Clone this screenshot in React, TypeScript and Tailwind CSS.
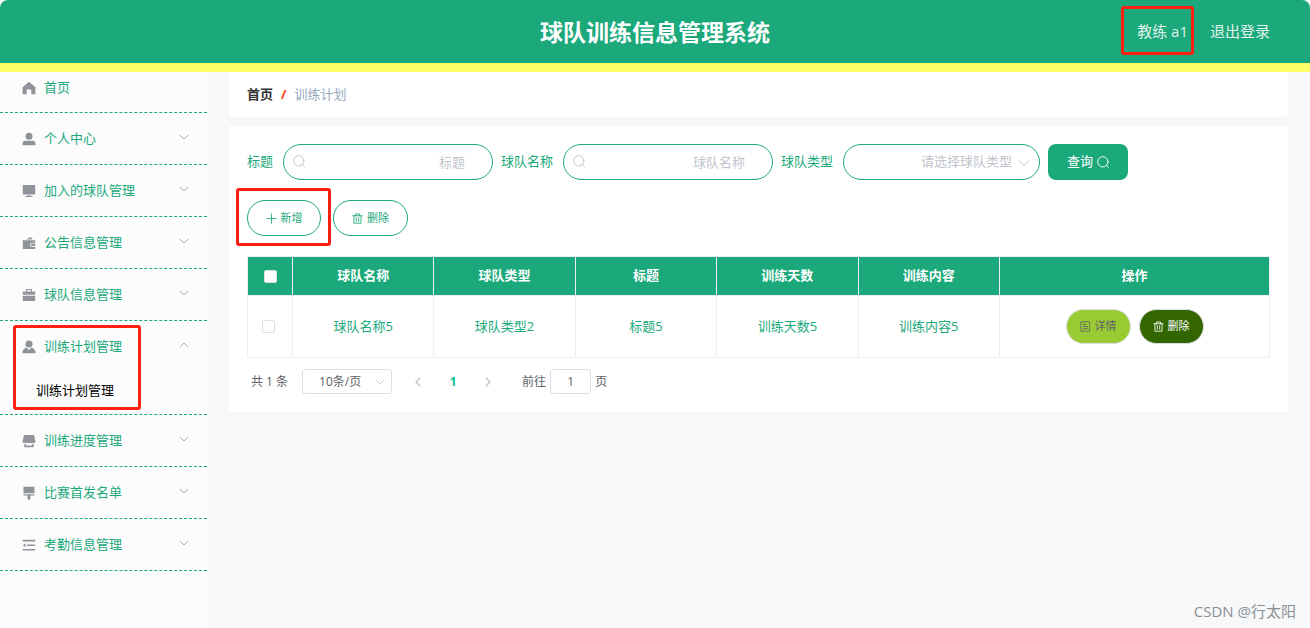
import React from "react";

type IconProps = { className?: string };

function Solid({ className = "", children }: IconProps & { children: React.ReactNode }) {
  return (
    <svg viewBox="0 0 14 14" fill="currentColor" aria-hidden="true" className={`size-3.5 shrink-0 ${className}`}>
      {children}
    </svg>
  );
}

function Line({ className = "", children }: IconProps & { children: React.ReactNode }) {
  return (
    <svg
      viewBox="0 0 14 14"
      fill="none"
      stroke="currentColor"
      strokeWidth="1.1"
      strokeLinecap="round"
      strokeLinejoin="round"
      aria-hidden="true"
      className={`shrink-0 ${className}`}
    >
      {children}
    </svg>
  );
}

const HomeIcon = () => (
  <Solid>
    <path d="M7 .8 13.400 6.200V13.200H9.300V9.200A.7.7 0 0 0 8.600 8.500H5.400a.7.7 0 0 0-.7.7v4H.6V6.200Z" />
  </Solid>
);
const UserIcon = () => (
  <Solid>
    <circle cx="7" cy="4.200" r="3.500" />
    <path d="M3.500 8.800h7a3 3 0 0 1 3 3v.8a.7.7 0 0 1-.7.7H1.200a.7.7 0 0 1-.7-.7v-.8a3 3 0 0 1 3-3Z" />
  </Solid>
);
const PlatformIcon = () => (
  <Solid>
    <path d="M.8 1h12.400v9.400H.8ZM5.500 11.200h3v.8h2v1h-7v-1h2Z" />
  </Solid>
);
const WalletIcon = () => (
  <Solid>
    <path d="M4 3.600 8.400 1l2.400 2.600ZM.8 4.300h12.400v2.400H10a2 2 0 0 0 0 4.200h3.200V13H.8ZM10 7.600h3.200V10H10a1.200 1.200 0 0 1 0-2.400Z" />
  </Solid>
);
const CaseIcon = () => (
  <Solid>
    <path d="M4 1h6v2.500h3.200v3.300H.8V3.500H4Zm1.100 1v1.500h3.800V2ZM.8 7.800h12.400V13H.8Z" />
  </Solid>
);
const CustomIcon = () => (
  <Solid>
    <circle cx="7" cy="3.900" r="3.500" />
    <path d="M4.600 7.500 7 9.900l2.400-2.400c2.500.7 4.300 2.600 4.300 5.800H.3c0-3.200 1.800-5.100 4.300-5.800Z" />
  </Solid>
);
const ShopIcon = () => (
  <Solid>
    <path d="M1.900 1h10.200l1.300 6.800c0 1.500-1.900 1.700-2.300.6-.4 1-2.300 1-2.700 0-.4 1-2.400 1-2.800 0-.4 1-2.300 1-2.700 0-.4 1.100-2.300.9-2.300-.6ZM2.300 10h1.500v1.400h6.400V10h1.500v3.200H2.300Z" />
  </Solid>
);
const BrushIcon = () => (
  <Solid>
    <path d="M1.500.8h11v6.500h-11ZM1.500 8.200h11v1.300H8.400v3a1.400 1.400 0 0 1-2.800 0v-3H1.500Z" />
  </Solid>
);
const FoldIcon = () => (
  <Solid>
    <path d="M.8 1.800h12.400v1.600H.8ZM5 6.400h8.200V8H5ZM.8 11h12.400v1.600H.8ZM3.600 5.200v4L.9 7.200Z" />
  </Solid>
);

const Chevron = ({ className = "" }: IconProps) => (
  <Line className={className}>
    <path d="M1.500 4.500 7 9.700l5.500-5.200" />
  </Line>
);
const Search = ({ className = "" }: IconProps) => (
  <Line className={className}>
    <circle cx="6.800" cy="6.800" r="6" />
    <path d="m11 11 2.300 2.300" />
  </Line>
);
const Plus = ({ className = "" }: IconProps) => (
  <Line className={className}>
    <path d="M7 1v12M1 7h12" />
  </Line>
);
const Trash = ({ className = "" }: IconProps) => (
  <Line className={className}>
    <path d="M1 3.500h12M4.500 3.500V1.200h5v2.300M2.500 3.500V13h9V3.500M5.500 6v4.500M8.500 6v4.500" />
  </Line>
);
const Doc = ({ className = "" }: IconProps) => (
  <Line className={className}>
    <path d="M1.700 1h10.600v12H1.700ZM4.300 4.300h3M4.300 7h5.400M4.300 9.800h5.400" />
  </Line>
);

const Mark = ({ className = "" }: IconProps) => (
  <span aria-hidden="true" className={`pointer-events-none absolute z-10 rounded-[3px] border-3 border-[#ff1f10] ${className}`} />
);

const menu = [
  { label: "个人中心", Icon: UserIcon },
  { label: "加入的球队管理", Icon: PlatformIcon },
  { label: "公告信息管理", Icon: WalletIcon },
  { label: "球队信息管理", Icon: CaseIcon },
  { label: "训练计划管理", Icon: CustomIcon, child: "训练计划管理" },
  { label: "训练进度管理", Icon: ShopIcon },
  { label: "比赛首发名单", Icon: BrushIcon },
  { label: "考勤信息管理", Icon: FoldIcon },
];

const columns = ["球队名称", "球队类型", "标题", "训练天数", "训练内容"];
const rows = [["球队名称5", "球队类型2", "标题5", "训练天数5", "训练内容5"]];

function Sidebar() {
  return (
    <nav className="w-[207px] shrink-0 bg-[#fcfcfc] text-[13px] text-[#1ba97b]">
      <ul>
        <li className="border-b border-dashed border-[#1ba97b]">
          <a href="#home" className="flex h-10 items-center gap-2 pb-2 pl-[22px]">
            <span className="text-[#909399]"><HomeIcon /></span>
            首页
          </a>
        </li>
        {menu.map(({ label, Icon, child }) => (
          <li key={label} className="relative border-b border-dashed border-[#1ba97b]">
            <button type="button" aria-expanded={!!child} className="flex h-[51px] w-full items-center gap-2 pr-[18px] pl-[22px]">
              <span className="text-[#909399]"><Icon /></span>
              {label}
              <Chevron className={child ? "mb-1 ml-auto size-2.5 rotate-180 text-[#909399]" : "mb-1 ml-auto size-2.5 text-[#909399]"} />
            </button>
            {child && (
              <>
                <a href="#plan" className="flex h-[42px] items-center pb-1 pl-9 text-black">{child}</a>
                <Mark className="top-1 left-[13px] h-[85px] w-32" />
              </>
            )}
          </li>
        ))}
      </ul>
    </nav>
  );
}

function SearchField({ id, label }: { id: string; label: string }) {
  return (
    <div className="flex items-center gap-2.5">
      <label htmlFor={id}>{label}</label>
      <div className="relative">
        <Search className="absolute top-[11px] left-2.5 size-3 text-[#c0c4cc]" />
        <input
          id={id}
          type="text"
          placeholder={label}
          className="h-9 w-[210px] rounded-full border border-[#1ba97b] bg-white pr-[27px] pl-7 text-right outline-none placeholder:text-[#c0c4cc]"
        />
      </div>
    </div>
  );
}

function Pagination() {
  return (
    <div className="mt-[11px] flex items-center pl-1 text-xs text-[#606266]">
      <span>共 1 条</span>
      <div className="relative ml-3.5">
        <select
          aria-label="每页条数"
          className="h-[25px] w-[90px] appearance-none rounded-[3px] border border-[#dcdfe6] bg-white pr-3.5 text-center [text-align-last:center]"
        >
          <option>10条/页</option>
        </select>
        <Chevron className="pointer-events-none absolute top-2 right-[7px] size-2.5 text-[#c0c4cc]" />
      </div>
      <button type="button" aria-label="上一页" className="ml-[21px] text-[#c0c4cc]">
        <Chevron className="size-2.5 rotate-90 stroke-2" />
      </button>
      <button type="button" aria-current="page" className="w-[60px] font-bold text-[#00c292]">1</button>
      <button type="button" aria-label="下一页" className="text-[#c0c4cc]">
        <Chevron className="size-2.5 -rotate-90 stroke-2" />
      </button>
      <label htmlFor="page" className="ml-[29px]">前往</label>
      <input
        id="page"
        type="text"
        defaultValue="1"
        className="mx-1 h-[25px] w-[41px] rounded-[3px] border border-[#dcdfe6] bg-white text-center outline-none"
      />
      <span>页</span>
    </div>
  );
}

export default function App() {
  return (
    <div className="relative flex min-h-screen flex-col overflow-hidden rounded-lg bg-[#f6f8fa] font-['Open_Sans','Noto_Sans_CJK_SC',sans-serif] text-[13px]">
      <header className="grid h-[72px] grid-cols-[1fr_auto_1fr] items-center border-b-9 border-[#ffff66] bg-[#1ba97b] text-white">
        <h1 className="col-start-2 text-[23px] leading-8 font-bold">球队训练信息管理系统</h1>
        <div className="flex items-center justify-end gap-[22px] pr-10 text-[15px] text-[#e0f3ec]">
          <span className="relative">
            教练 a1
            <Mark className="-top-3.5 -right-1.5 h-[49px] w-[73px]" />
          </span>
          <a href="#logout">退出登录</a>
        </div>
      </header>

      <div className="flex flex-1">
        <Sidebar />
        <main className="min-w-0 flex-1 px-[22px]">
          <nav aria-label="面包屑" className="flex h-[45px] items-center gap-2 rounded-b bg-white pl-[18px]">
            <a href="#home" className="font-bold text-[#303133]">首页</a>
            <span className="font-bold text-[#ff3a1a]">/</span>
            <span className="text-[#97a8be]">训练计划</span>
          </nav>

          <section className="mt-[9px] bg-white p-[18px] text-[#1ba97b]">
            <form className="flex items-center gap-2" onSubmit={(e) => e.preventDefault()}>
              <SearchField id="title" label="标题" />
              <SearchField id="team" label="球队名称" />
              <div className="flex items-center gap-2.5">
                <label htmlFor="type">球队类型</label>
                <div className="relative">
                  <select
                    id="type"
                    className="h-9 w-[197px] appearance-none rounded-full border border-[#1ba97b] bg-white pr-[27px] pl-4 text-right text-[#c0c4cc] outline-none [text-align-last:right]"
                  >
                    <option>请选择球队类型</option>
                  </select>
                  <Chevron className="pointer-events-none absolute top-[13px] right-2.5 size-3 text-[#c0c4cc]" />
                </div>
              </div>
              <button type="submit" className="flex h-9 w-20 items-center justify-center gap-1 rounded-lg bg-[#1ba97b] text-white">
                查询
                <Search className="size-3" />
              </button>
            </form>

            <div className="mt-5 flex gap-3 text-[11px]">
              <div className="relative">
                <button type="button" className="flex h-9 w-[74px] items-center justify-center gap-1 rounded-full border border-[#1ba97b]">
                  <Plus className="size-[11px]" />
                  新增
                </button>
                <Mark className="-top-3 -left-[11px] h-[58px] w-[95px]" />
              </div>
              <button type="button" className="flex h-9 w-[75px] items-center justify-center gap-1 rounded-full border border-[#1ba97b]">
                <Trash className="size-[11px]" />
                删除
              </button>
            </div>

            <table className="mt-5 w-full table-fixed border-collapse text-center">
              <thead>
                <tr className="h-[39px] bg-[#1ba97b] text-white">
                  <th className="w-[45px] border border-[#ebeef5]">
                    <input type="checkbox" aria-label="全选" className="mx-auto block size-[13px] appearance-none rounded-[2px] border border-[#dcdfe6] bg-white" />
                  </th>
                  {columns.map((c) => (
                    <th key={c} className="border border-[#ebeef5] font-bold">{c}</th>
                  ))}
                  <th className="w-[270px] border border-[#ebeef5] font-bold">操作</th>
                </tr>
              </thead>
              <tbody>
                {rows.map((row) => (
                  <tr key={row[0]} className="h-[62px]">
                    <td className="border border-[#ebeef5] pr-1">
                      <input type="checkbox" aria-label="选择" className="mx-auto block size-[13px] appearance-none rounded-[2px] border border-[#dcdfe6] bg-white" />
                    </td>
                    {row.map((cell) => (
                      <td key={cell} className="border border-[#ebeef5]">{cell}</td>
                    ))}
                    <td className="border border-[#ebeef5]">
                      <div className="flex justify-center gap-2 text-[11px]">
                        <button type="button" className="flex h-[35px] w-[65px] items-center justify-center gap-1 rounded-full border border-[#dcdfe6] bg-[#99cc33] text-[#606266]">
                          <Doc className="size-[11px]" />
                          详情
                        </button>
                        <button type="button" className="flex h-[35px] w-[65px] items-center justify-center gap-1 rounded-full border border-[#dcdfe6] bg-[#336600] text-white">
                          <Trash className="size-[11px]" />
                          删除
                        </button>
                      </div>
                    </td>
                  </tr>
                ))}
              </tbody>
            </table>

            <Pagination />
          </section>
        </main>
      </div>

      <span className="pointer-events-none absolute right-3.5 bottom-1.5 text-[15px] text-[#8c8f93]">CSDN @行太阳</span>
    </div>
  );
}
